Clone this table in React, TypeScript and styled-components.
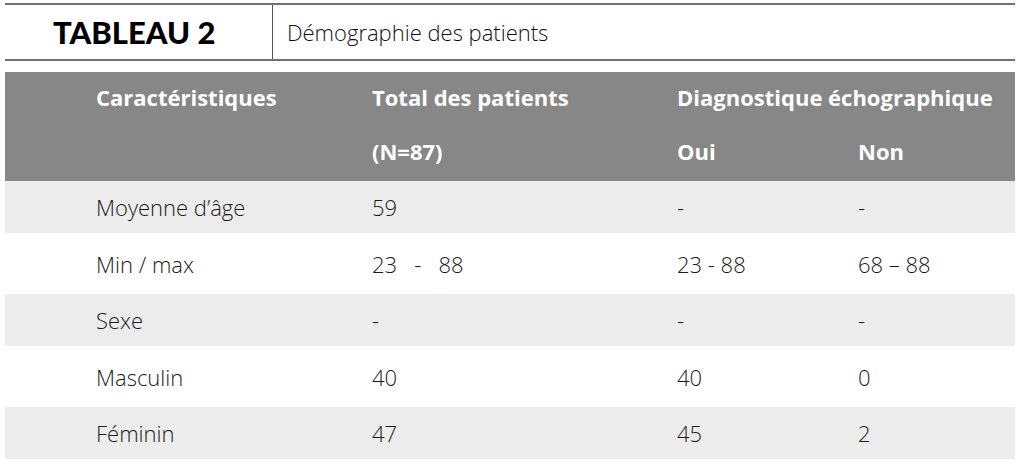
import * as React from 'react';
import styled, { createGlobalStyle } from 'styled-components';

const GlobalStyle = createGlobalStyle`
  html, body {
    margin: 0;
    padding: 0;
    background: #ffffff;
  }
  body {
    font-family: "Open Sans", "Noto Sans", "Liberation Sans", sans-serif;
  }
`;

const Page = styled.div`
  width: 1010px;
  padding: 3px 6px 0 5px;
`;

const TitleBar = styled.div`
  display: flex;
  height: 54px;
  border-top: 2px solid #707070;
  border-bottom: 2px solid #707070;
`;

const TitleLabel = styled.div`
  display: flex;
  align-items: center;
  width: 219px;
  padding-left: 48px;
  border-right: 1px solid #555555;
  font-family: Lato, "Open Sans", sans-serif;
  font-size: 31px;
  font-weight: 900;
  color: #000000;
`;

const TitleText = styled.div`
  display: flex;
  align-items: center;
  padding-left: 14px;
  font-size: 22px;
  font-weight: 300;
  color: #111111;
`;

const Table = styled.div`
  margin-top: 11px;
`;

const Row = styled.div<{ $height: number; $bg: string }>`
  display: grid;
  grid-template-columns: 276px 305px 181px 1fr;
  align-items: center;
  height: ${p => p.$height}px;
  padding-left: 91px;
  background: ${p => p.$bg};
`;

const HeadCell = styled.div<{ $span?: number }>`
  grid-column: span ${p => p.$span ?? 1};
  font-size: 22px;
  font-weight: 700;
  color: #ffffff;
  white-space: nowrap;
`;

const Cell = styled.div`
  font-size: 22px;
  font-weight: 300;
  color: #1a1a1a;
  white-space: nowrap;
`;

const HEAD_BG = '#878787';

const rows = [
  { label: 'Moyenne d’âge', total: '59', oui: '-', non: '-' },
  { label: 'Min / max', total: '23\u00a0\u00a0 -\u00a0\u00a0 88', oui: '23 - 88', non: '68 – 88' },
  { label: 'Sexe', total: '-', oui: '-', non: '-' },
  { label: 'Masculin', total: '40', oui: '40', non: '0' },
  { label: 'Féminin', total: '47', oui: '45', non: '2' },
];

export default function App() {
  return (
    <Page>
      <GlobalStyle />
      <TitleBar>
        <TitleLabel>TABLEAU 2</TitleLabel>
        <TitleText>Démographie des patients</TitleText>
      </TitleBar>
      <Table>
        <Row $height={49} $bg={HEAD_BG}>
          <HeadCell>Caractéristiques</HeadCell>
          <HeadCell>Total des patients</HeadCell>
          <HeadCell $span={2}>Diagnostique échographique</HeadCell>
        </Row>
        <Row $height={60} $bg={HEAD_BG}>
          <HeadCell />
          <HeadCell>(N=87)</HeadCell>
          <HeadCell>Oui</HeadCell>
          <HeadCell>Non</HeadCell>
        </Row>
        {rows.map((r, i) => (
          <Row key={r.label} $height={i % 2 === 0 ? 52 : 61} $bg={i % 2 === 0 ? '#ececec' : '#ffffff'}>
            <Cell>{r.label}</Cell>
            <Cell>{r.total}</Cell>
            <Cell>{r.oui}</Cell>
            <Cell>{r.non}</Cell>
          </Row>
        ))}
      </Table>
    </Page>
  );
}
